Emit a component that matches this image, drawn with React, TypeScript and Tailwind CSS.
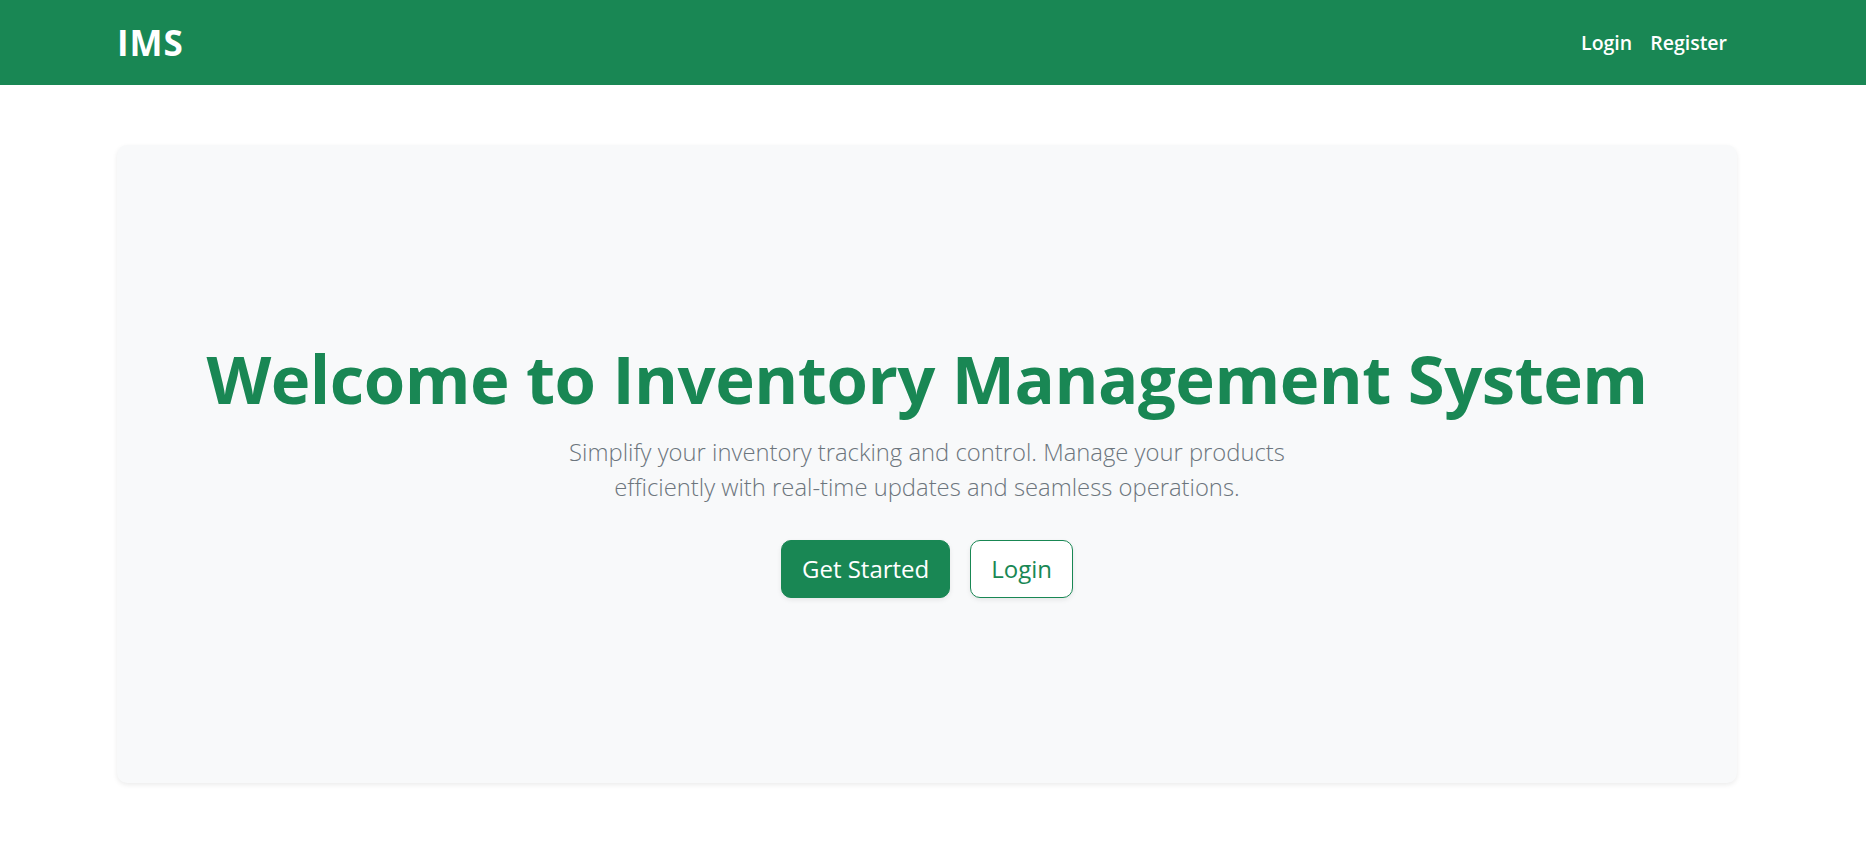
import React from "react";

const font = { fontFamily: '"Open Sans", "Noto Sans", "Liberation Sans", sans-serif' };

function Navbar() {
  return (
    <nav className="bg-[#198754] h-[85px]">
      <div className="ml-[102px] w-[1650px] px-[15px] h-full flex items-center justify-between">
        <a href="#" className="text-white font-bold text-[35px] leading-none tracking-[1px]">
          IMS
        </a>
        <div className="flex items-center">
          <a href="#" className="text-white font-semibold text-[19.5px] pl-[10px] pr-[8px]">
            Login
          </a>
          <a href="#" className="text-white font-semibold text-[19.5px] px-[10px]">
            Register
          </a>
        </div>
      </div>
    </nav>
  );
}

export default function App() {
  return (
    <div className="min-h-screen bg-white" style={font}>
      <Navbar />
      <main className="ml-[102px] w-[1650px] px-[15px] pt-[60px]">
        {/* Hero card */}
        <div className="bg-[#f8f9fa] rounded-[10px] shadow-[0_2px_5px_rgba(0,0,0,0.08)] h-[638px] pt-[8px] flex flex-col items-center justify-center text-center">
          <h1 className="text-[#198754] font-bold text-[67px] leading-[1.2] mb-[16px] tracking-[-0.5px]">
            Welcome to Inventory Management System
          </h1>
          <p className="text-[#6c757d] font-light text-[23.8px] leading-[1.5] max-w-[740px] mb-[34px]">
            Simplify your inventory tracking and control. Manage your products efficiently with real-time updates and seamless operations.
          </p>
          <div className="flex gap-[20px]">
            <button className="bg-[#198754] text-white text-[24px] leading-[1.5] px-[20px] py-[10px] rounded-[10px] border border-[#198754] shadow-[0_2px_5px_rgba(0,0,0,0.08)]">
              Get Started
            </button>
            <button className="bg-white text-[#198754] text-[24px] leading-[1.5] px-[20px] py-[10px] rounded-[10px] border border-[#198754] shadow-[0_2px_5px_rgba(0,0,0,0.08)]">
              Login
            </button>
          </div>
        </div>
      </main>
    </div>
  );
}
